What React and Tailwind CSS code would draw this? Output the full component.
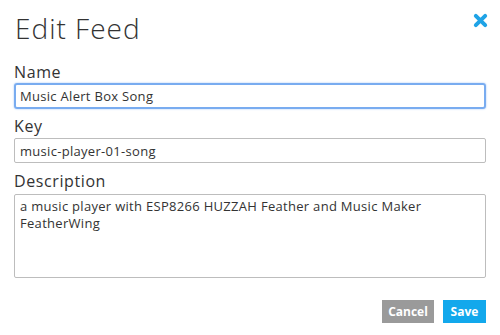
export default function App() {
  return (
    <div className="h-[335px] w-[500px] bg-white px-[14px] pt-[10px] text-[#333] [font-family:'Open_Sans',sans-serif]">
      <div className="flex items-start justify-between">
        <h2 className="ml-[1px] text-[28px] font-light leading-[36px] tracking-[1px]">Edit Feed</h2>
        <button className="mt-[3px] mr-[-2px] text-[#1fa3e6]">
          <svg width="15" height="15" viewBox="0 0 16 16">
            <path d="M3 3 L13 13 M13 3 L3 13" stroke="currentColor" strokeWidth="4.2" strokeLinecap="round" />
          </svg>
        </button>
      </div>

      <form className="mt-[16px] flex flex-col">
        <label className="text-[16px] leading-[20px] tracking-[0.6px]">Name</label>
        <input
          defaultValue="Music Alert Box Song"
          className="mt-[1px] h-[26px] w-full rounded-[3px] border-2 border-[#79acf0] px-[4px] text-[13px] tracking-[0.3px] shadow-[0_0_2px_#9cc3f5] outline-none"
        />

        <label className="mt-[7px] text-[16px] leading-[20px] tracking-[0.6px]">Key</label>
        <input
          defaultValue="music-player-01-song"
          className="mt-[2px] h-[25px] w-full rounded-[2px] border border-[#bdbdbd] px-[5px] text-[13px] tracking-[0.3px] outline-none"
        />

        <label className="mt-[8px] text-[16px] leading-[20px] tracking-[0.6px]">Description</label>
        <textarea
          defaultValue="a music player with ESP8266 HUZZAH Feather and Music Maker FeatherWing"
          className="mt-[3px] h-[84px] w-full resize-none rounded-[2px] border border-[#bdbdbd] px-[5px] py-[3px] text-[13px] leading-[17px] tracking-[0.3px] outline-none"
        />

        <div className="mt-[22px] flex justify-end gap-[9px]">
          <button type="button" className="h-[23px] w-[52px] bg-[#9a9a9a] text-[12px] font-bold text-white">
            Cancel
          </button>
          <button type="button" className="h-[23px] w-[43px] bg-[#12a8ec] text-[12px] font-bold text-white">
            Save
          </button>
        </div>
      </form>
    </div>
  )
}
